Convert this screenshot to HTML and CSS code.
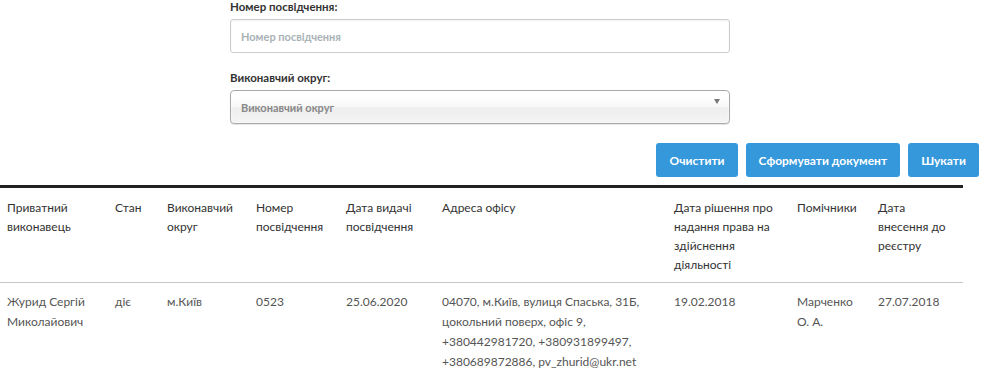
FILE: index.html
```html
<!DOCTYPE html>
<html lang="uk">
<head>
  <meta charset="UTF-8">
  <title>Реєстр приватних виконавців</title>
  <link rel="stylesheet" href="styles.css">
</head>
<body>
  <form class="search-form">
    <label class="field-label" for="cert">Номер посвідчення:</label>
    <input class="field-input" id="cert" type="text" placeholder="Номер посвідчення">

    <label class="field-label" for="district">Виконавчий округ:</label>
    <div class="chosen-select" id="district">
      <span>Виконавчий округ</span>
      <b class="chosen-arrow"></b>
    </div>
  </form>

  <div class="actions">
    <button class="btn">Очистити</button>
    <button class="btn">Сформувати документ</button>
    <button class="btn">Шукати</button>
  </div>

  <table class="registry-table">
    <colgroup>
      <col style="width: 108px">
      <col style="width: 52px">
      <col style="width: 89px">
      <col style="width: 90px">
      <col style="width: 96px">
      <col style="width: 232px">
      <col style="width: 123px">
      <col style="width: 81px">
      <col style="width: 92px">
    </colgroup>
    <thead>
      <tr>
        <th>Приватний виконавець</th>
        <th>Стан</th>
        <th>Виконавчий округ</th>
        <th>Номер посвідчення</th>
        <th>Дата видачі посвідчення</th>
        <th>Адреса офісу</th>
        <th>Дата рішення про надання права на здійснення діяльності</th>
        <th>Помічники</th>
        <th>Дата внесення до реєстру</th>
      </tr>
    </thead>
    <tbody>
      <tr>
        <td>Журид Сергій Миколайович</td>
        <td>діє</td>
        <td>м.Київ</td>
        <td>0523</td>
        <td>25.06.2020</td>
        <td>04070, м.Київ, вулиця Спаська, 31Б, цокольний поверх, офіс 9, +380442981720, +380931899497, +380689872886, pv_zhurid@ukr.net</td>
        <td>19.02.2018</td>
        <td>Марченко О. А.</td>
        <td>27.07.2018</td>
      </tr>
    </tbody>
  </table>
</body>
</html>
```

FILE: styles.css
```css
body {
  margin: 0;
  font-family: Lato, "Noto Sans", sans-serif;
  color: #333;
  background-color: #fff;
}

.search-form {
  width: 500px;
  margin-left: 230px;
  display: flex;
  flex-direction: column;
}

.field-label {
  font-size: 11.5px;
  font-weight: bold;
  line-height: 13px;
  color: #333;
  margin-bottom: 6px;
}

.field-input {
  box-sizing: border-box;
  height: 34px;
  padding: 0 10px;
  border: 1px solid #ccc;
  border-radius: 3px;
  box-shadow: inset 0 1px 2px rgba(0, 0, 0, 0.06);
  font-family: inherit;
  font-size: 11px;
  font-weight: bold;
  margin-bottom: 18px;
}

.field-input::placeholder {
  color: #a9b2b6;
}

.chosen-select {
  box-sizing: border-box;
  position: relative;
  height: 34px;
  padding: 0 10px;
  display: flex;
  align-items: center;
  border: 1px solid #aaa;
  border-radius: 4px;
  background: linear-gradient(#fff 20%, #f6f6f6 50%, #eee 52%, #f4f4f4 100%);
  box-shadow: inset 0 0 3px #fff, 0 1px 1px rgba(0, 0, 0, 0.1);
  font-size: 11px;
  font-weight: bold;
  color: #888;
}

.chosen-arrow {
  position: absolute;
  right: 9px;
  top: 8px;
  width: 0;
  height: 0;
  border-left: 3px solid transparent;
  border-right: 3px solid transparent;
  border-top: 5px solid #777;
}

.actions {
  display: flex;
  justify-content: flex-end;
  gap: 8px;
  margin-top: 19px;
  margin-right: 21px;
}

.btn {
  height: 34px;
  padding: 0 13px;
  border: none;
  border-radius: 3px;
  background-color: #3498db;
  color: #fff;
  font-family: inherit;
  font-size: 12px;
  font-weight: bold;
  cursor: pointer;
}

.registry-table {
  width: 963px;
  margin-top: 8px;
  border-collapse: collapse;
  table-layout: fixed;
  border-top: 3px solid #222;
  font-size: 12px;
}

.registry-table th,
.registry-table td {
  padding: 0 7px;
  text-align: left;
  vertical-align: top;
}

.registry-table th {
  font-weight: normal;
  color: #333;
  line-height: 19px;
  padding-top: 10px;
  padding-bottom: 8px;
  border-bottom: 1px solid #c8c8c8;
}

.registry-table td {
  color: #555;
  line-height: 20px;
  padding-top: 9px;
  padding-bottom: 9px;
}
```
